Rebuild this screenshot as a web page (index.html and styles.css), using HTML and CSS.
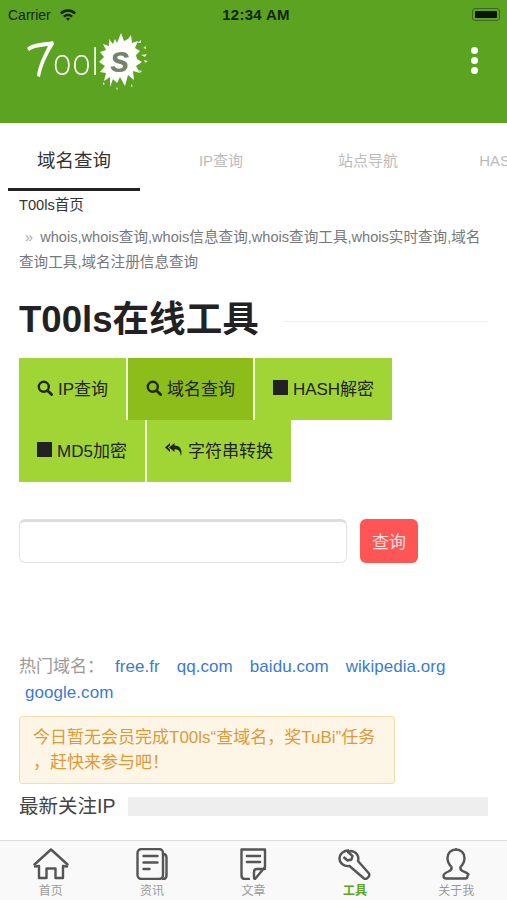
FILE: index.html
```html
<!DOCTYPE html>
<html>
<head>
    <title>T00ls在线工具</title>
    <link rel="stylesheet" href="styles.css">
</head>
<body>
    <div class="app">
        <header class="topbar">
            <div class="status">
                <div class="status-left">
                    <span>Carrier</span>
                    <svg class="wifi" width="18" height="13" viewBox="0 0 18 13">
                        <path d="M1 4.600a11.400 11.400 0 0 1 16 0l-1.700 1.800a9 9 0 0 0-12.600 0z" fill="#14260a"/>
                        <path d="M4.100 7.700a7 7 0 0 1 9.800 0l-1.700 1.800a4.600 4.600 0 0 0-6.400 0z" fill="#14260a"/>
                        <path d="M7 10.600a2.900 2.900 0 0 1 4 0l-2 2.100z" fill="#14260a"/>
                    </svg>
                </div>
                <div class="status-time">12:34 AM</div>
                <div class="battery"><span class="battery-fill"></span></div>
            </div>
            <div class="navbar">
                <svg class="logo" width="125" height="60" viewBox="0 0 125 60">
                    <polygon points="90,9 92,13 96,3 99,11 103,9 106,5 107,13 113,11 110,18 115,21 111,25 112,29 117,32 111,36 115,43 108,41 109,50 103,45 100,56 95,47 92,53 88,49 85,57 85,47 79,51 81,43 75,42 80,36 74,32 79,27 75,22 81,20 78,14 84,16 84,9 88,14" fill="#fff"/>
                    <path d="M112 13l4-3 0 3zM118 18l3-2 0 3zM116 25l6-1-2 3zM119 30l4 1-3 2zM114 40l3 1-2 2zM78 52l2 2-2 1zM92 57l1 3-2-1zM106 54l2 2-2 1z" fill="#dcebc8"/>
                    <path d="M2 18C8 12 20 13 28 11l1 3C22 25 17 36 15 47l-3-1c1-10 6-20 11-30C16 17 9 17 4 21z" fill="#fff"/>
                    <text class="logo-text" transform="translate(28,45) scale(.85,1)">ool</text>
                    <text class="logo-s" x="85" y="42">s</text>
                </svg>
                <div class="more"><span></span><span></span><span></span></div>
            </div>
        </header>

        <nav class="tabs">
            <div class="tab tab-active">域名查询</div>
            <div class="tab">IP查询</div>
            <div class="tab">站点导航</div>
            <div class="tab">HASH解密</div>
        </nav>

        <main class="content">
            <div class="crumb">T00ls首页</div>
            <p class="keywords"><span class="raquo">»</span>whois,whois查询,whois信息查询,whois查询工具,whois实时查询,域名查询工具,域名注册信息查询</p>

            <div class="title-row">
                <h1>T00ls在线工具</h1>
                <div class="title-line"></div>
            </div>

            <div class="tool-btns">
                <a class="tool-btn w-ip">
                    <svg class="ico" width="16" height="16" viewBox="0 0 16 16"><circle cx="6.800" cy="6.800" r="5" fill="none" stroke="#1d2a12" stroke-width="2.400"/><path d="M10.400 10.400l4.200 4.200" stroke="#1d2a12" stroke-width="2.800" stroke-linecap="round"/></svg>
                    IP查询
                </a>
                <a class="tool-btn tool-btn-on w-domain">
                    <svg class="ico" width="16" height="16" viewBox="0 0 16 16"><circle cx="6.800" cy="6.800" r="5" fill="none" stroke="#1d2a12" stroke-width="2.400"/><path d="M10.400 10.400l4.200 4.200" stroke="#1d2a12" stroke-width="2.800" stroke-linecap="round"/></svg>
                    域名查询
                </a>
                <a class="tool-btn w-hash"><span class="square"></span>HASH解密</a>
                <a class="tool-btn w-md5"><span class="square"></span>MD5加密</a>
                <a class="tool-btn w-str">
                    <svg class="ico-reply" width="18" height="15" viewBox="0 0 18 15"><path d="M5 1L0 5.500 5 10V7.600L2.800 5.500 5 3.400z" fill="#1d2a12"/><path d="M9.500 1L4 5.500 9.500 10V7.200c3.600 0 5.600 1.400 6.500 6.800 1.600-5.500-.5-10.500-6.500-10.500z" fill="#1d2a12"/></svg>
                    字符串转换
                </a>
            </div>

            <form class="search">
                <input class="search-input" type="text">
                <button class="search-btn" type="button">查询</button>
            </form>

            <div class="hot">
                <span class="hot-label">热门域名：</span><a>free.fr</a><a>qq.com</a><a>baidu.com</a><a>wikipedia.org</a><a>google.com</a>
            </div>

            <div class="notice">今日暂无会员完成T00ls“查域名，奖TuBi”任务<br>，赶快来参与吧！</div>

            <div class="latest">
                <span class="latest-title">最新关注IP</span>
                <div class="latest-bar"></div>
            </div>
        </main>

        <footer class="tabbar">
            <div class="bar-item">
                <svg width="36" height="32" viewBox="0 0 36 32" fill="none" stroke="#555" stroke-width="2.400" stroke-linejoin="round" stroke-linecap="round"><path d="M1.500 16.500L18 1.500l16.500 15"/><path d="M2 18.500l4-.5V30h7.500v-9.500h9V30H30V18l4 .5"/></svg>
                <span>首页</span>
            </div>
            <div class="bar-item">
                <svg width="32" height="32" viewBox="0 0 32 32" fill="none" stroke="#555" stroke-width="2.400" stroke-linecap="round"><rect x="1.500" y="1" width="25.500" height="30" rx="4"/><path d="M27 6c2.500 0 3.500 1.500 3.500 3.500V27c0 2.500-1.500 4-3.500 4"/><path d="M7.500 8h14M7.500 14.500h14M7.500 21h6"/></svg>
                <span>资讯</span>
            </div>
            <div class="bar-item">
                <svg width="27" height="32" viewBox="0 0 27 32" fill="none" stroke="#555" stroke-width="2.400" stroke-linecap="round" stroke-linejoin="round"><path d="M9 31H5c-2 0-3.500-1.500-3.500-3.500V1.500h23.500V19L15 31c-1 0-1-1-1-2v-5c0-2 1-3 3-3h8"/><path d="M7 8h13M7 14h13" stroke-width="2.600"/></svg>
                <span>文章</span>
            </div>
            <div class="bar-item">
                <svg width="34" height="32" viewBox="0 0 34 32" fill="none" stroke="#555" stroke-width="2.400" stroke-linejoin="round"><path d="M11 2.500C6 2 1.500 6 1.500 10.500c0 4.500 4.500 8.500 10 7.500l14.500 12.500c2 1.500 6.500-2 5-5L20 13c1.500-5-2-9.500-7-10l-3 1 4.500 4-1 3.500-4 1-4-3.500"/></svg>
                <span class="bar-on">工具</span>
            </div>
            <div class="bar-item">
                <svg width="28" height="32" viewBox="0 0 28 32" fill="none" stroke="#555" stroke-width="2.400" stroke-linecap="round" stroke-linejoin="round"><path d="M14 1.500c-5 0-8.500 3.500-8.500 8.500 0 3.500 1.500 6.500 4 9 .5 2-.5 3.500-3 4.500-2.500 1-5 2.500-5 4.500 0 1.500 1 2.500 3 2.500h19c1.500 0 2-1 2-2.500"/><path d="M14 1.500c5 0 8.500 3.500 8.500 8.500 0 3.500-1.500 6.500-4 9-.5 2 .5 3.500 3 4.500 2 .8 4 1.500 5 3"/></svg>
                <span>关于我</span>
            </div>
        </footer>
    </div>
</body>
</html>
```

FILE: styles.css
```css
* {
    box-sizing: border-box;
}
html, body {
    margin: 0;
    padding: 0;
}
body {
    font-family: "Liberation Sans", "Noto Sans CJK SC", sans-serif;
    background-color: #fff;
    color: #333;
}
.app {
    width: 507px;
    height: 900px;
    display: flex;
    flex-direction: column;
    overflow: hidden;
}

/* green header */
.topbar {
    height: 123px;
    background-color: #5ba320;
    flex-shrink: 0;
}
.status {
    height: 27px;
    padding: 2px 8px 0;
    display: grid;
    grid-template-columns: 1fr auto 1fr;
    align-items: center;
    font-size: 14px;
    color: #14260a;
}
.status-left {
    display: flex;
    align-items: center;
    gap: 8px;
}
.status-time {
    font-weight: bold;
    font-size: 15px;
    letter-spacing: .3px;
    padding-left: 5px;
}
.battery {
    justify-self: end;
    width: 28px;
    height: 13px;
    border: 1px solid #3c6a18;
    border-radius: 3px;
    padding: 2px;
    margin-right: -1px;
}
.battery-fill {
    display: block;
    height: 100%;
    background-color: #0c1405;
    border-radius: 1px;
}
.navbar {
    display: flex;
    justify-content: space-between;
    padding: 3px 29px 0 25px;
}
.logo {
    filter: blur(.5px);
}
.logo-text {
    font-family: "Open Sans", sans-serif;
    font-weight: 300;
    font-size: 37px;
    letter-spacing: 1px;
    fill: #fff;
}
.logo-s {
    font-family: "Liberation Sans", sans-serif;
    font-style: italic;
    font-weight: bold;
    font-size: 36px;
    fill: #75836a;
}
.more {
    display: flex;
    flex-direction: column;
    gap: 3px;
    padding-top: 17px;
}
.more span {
    width: 7px;
    height: 7px;
    border-radius: 50%;
    background-color: #fff;
}

/* tabs */
.tabs {
    height: 68px;
    padding-left: 8px;
    display: flex;
    gap: 15px;
    flex-shrink: 0;
    overflow: hidden;
}
.tab {
    width: 132px;
    flex-shrink: 0;
    padding-top: 27px;
    text-align: center;
    font-size: 15px;
    line-height: 22px;
    color: #bbb;
    white-space: nowrap;
}
.tab-active {
    font-size: 18.500px;
    color: #333;
    border-bottom: 3px solid #222;
}

.content {
    flex: 1;
    padding: 5px 19px 0;
}
.crumb {
    font-size: 14.600px;
    line-height: 18px;
    color: #333;
}
.keywords {
    margin: 11px 0 0;
    font-size: 14.600px;
    line-height: 25px;
    color: #777;
}
.raquo {
    color: #aaa;
    margin: 0 7px 0 6px;
}
.title-row {
    margin-top: 23px;
    display: flex;
    align-items: center;
    gap: 25px;
}
h1 {
    margin: 0;
    font-size: 36.600px;
    line-height: 44px;
    font-weight: bold;
    color: #222;
    white-space: nowrap;
}
.title-line {
    flex: 1;
    height: 1px;
    background-color: #eee;
    margin-top: 2px;
}

/* tool buttons */
.tool-btns {
    margin-top: 16px;
    display: flex;
    flex-wrap: wrap;
    width: 380px;
}
.tool-btn {
    height: 62px;
    padding-bottom: 3px;
    display: flex;
    align-items: center;
    justify-content: center;
    gap: 5px;
    font-size: 17px;
    color: #222;
    background-color: #a0d535;
    border-right: 2px solid #eef8d4;
    white-space: nowrap;
}
.tool-btn-on {
    background-color: #8dbd1b;
}
.w-ip { width: 109px; }
.w-domain { width: 127px; }
.w-hash { width: 137px; border-right: none; }
.w-md5 { width: 128px; }
.w-str { width: 144px; border-right: none; }
.square {
    width: 15px;
    height: 15px;
    background-color: #222;
}

/* search */
.search {
    margin-top: 37px;
    display: flex;
    gap: 13px;
}
.search-input {
    width: 328px;
    height: 44px;
    border: 1px solid #e2e2e2;
    border-top: 3px solid #ddd;
    border-radius: 6px;
    background-color: #fff;
}
.search-btn {
    width: 58px;
    height: 44px;
    padding-bottom: 3px;
    border: none;
    border-radius: 6px;
    background-color: #ff5555;
    color: #ffe0e0;
    font-family: inherit;
    font-size: 17px;
}

/* hot domains */
.hot {
    margin-top: 91px;
    font-size: 17px;
    line-height: 25.500px;
}
.hot-label {
    color: #999;
    margin-right: 11px;
}
.hot a {
    color: #3a7bd5;
    margin-right: 17px;
    display: inline-block;
    letter-spacing: .05px;
}
.hot a:last-child {
    margin-left: 6px;
}

.notice {
    margin-top: 11px;
    width: 376px;
    height: 68px;
    padding: 8px 13px;
    font-size: 17px;
    line-height: 25px;
    color: #dc9a3a;
    background-color: #fdf6e6;
    border: 1px solid #f8dca8;
    border-radius: 3px;
    white-space: nowrap;
}

.latest {
    margin-top: 11px;
    display: flex;
    align-items: center;
    gap: 13px;
}
.latest-title {
    font-size: 19.500px;
    line-height: 22px;
    color: #444;
    white-space: nowrap;
}
.latest-bar {
    flex: 1;
    height: 19px;
    background-color: #eee;
}

/* bottom tab bar */
.tabbar {
    height: 60px;
    flex-shrink: 0;
    background-color: #f9f9f9;
    border-top: 1px solid #ddd;
    display: grid;
    grid-template-columns: repeat(5, 1fr);
}
.bar-item {
    display: flex;
    flex-direction: column;
    align-items: center;
    padding-top: 7px;
    gap: 4px;
}
.bar-item span {
    font-size: 12px;
    line-height: 15px;
    color: #999;
}
.bar-item .bar-on {
    color: #5ba320;
    font-weight: bold;
}
```
